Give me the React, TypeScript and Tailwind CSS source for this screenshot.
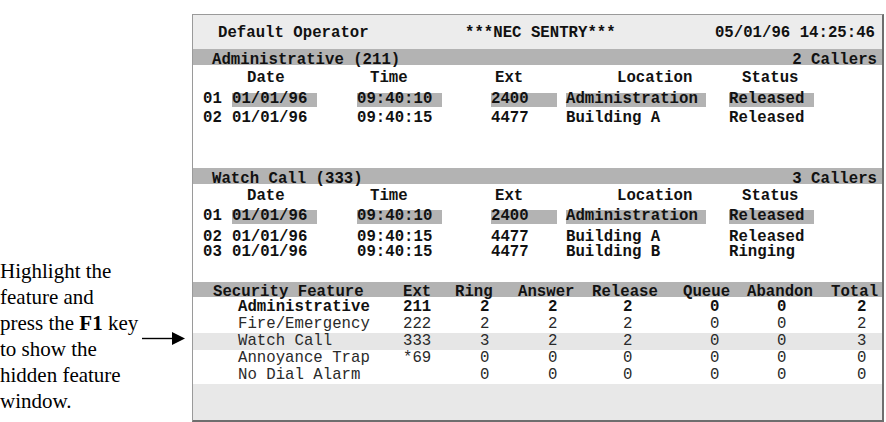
import React from "react";

type Call = {
  n: string;
  date: string;
  time: string;
  ext: string;
  loc: string;
  status: string;
  hl?: boolean;
  h: string;
};

type Feature = {
  name: string;
  ext: string;
  counts: string[];
  bold?: boolean;
  hl?: boolean;
};

const mono = "font-['Liberation_Mono',monospace]";

const adminCalls: Call[] = [
  { n: "01", date: "01/01/96", time: "09:40:10", ext: "2400", loc: "Administration", status: "Released", hl: true, h: "h-[19px]" },
  { n: "02", date: "01/01/96", time: "09:40:15", ext: "4477", loc: "Building A", status: "Released", h: "h-[20px]" },
];

const watchCalls: Call[] = [
  { n: "01", date: "01/01/96", time: "09:40:10", ext: "2400", loc: "Administration", status: "Released", hl: true, h: "h-[21px]" },
  { n: "02", date: "01/01/96", time: "09:40:15", ext: "4477", loc: "Building A", status: "Released", h: "h-[15px]" },
  { n: "03", date: "01/01/96", time: "09:40:15", ext: "4477", loc: "Building B", status: "Ringing", h: "h-[15px]" },
];

const features: Feature[] = [
  { name: "Administrative", ext: "211", counts: ["2", "2", "2", "0", "0", "2"], bold: true },
  { name: "Fire/Emergency", ext: "222", counts: ["2", "2", "2", "0", "0", "2"] },
  { name: "Watch Call", ext: "333", counts: ["3", "2", "2", "0", "0", "3"], hl: true },
  { name: "Annoyance Trap", ext: "*69", counts: ["0", "0", "0", "0", "0", "0"] },
  { name: "No Dial Alarm", ext: "", counts: ["0", "0", "0", "0", "0", "0"] },
];

// left padding of each count under its column heading
const countPad = ["pl-[25px]", "pl-[30px]", "pl-[31px]", "pl-[27px]", "pl-[30px]", "pl-[26px]"];

const CALL_COLS = "grid grid-cols-[29px_125px_134px_75px_163px_1fr] pl-[10px]";
const FEATURE_COLS = "grid grid-cols-[190px_52px_63px_74px_91px_64px_84px_1fr] pl-[20px]";

function Field({ w, hl, children }: { w: string; hl?: boolean; children: React.ReactNode }) {
  return (
    <span className={`block h-[14px] leading-[13px] whitespace-pre ${w} ${hl ? "bg-[#b3b3b3]" : ""}`}>
      {children}
    </span>
  );
}

function CallSection({
  title,
  callers,
  calls,
  headH,
}: {
  title: string;
  callers: string;
  calls: Call[];
  headH: string;
}) {
  return (
    <div>
      <div className="flex h-[16px] justify-between bg-[#b3b3b3] pl-[19px] pr-[5px] leading-[22px]">
        <span>{title}</span>
        <span>{callers}</span>
      </div>
      <div className={`${CALL_COLS} ${headH}`}>
        <span />
        <span className="pl-[15px]">Date</span>
        <span className="pl-[13px]">Time</span>
        <span className="pl-[4px]">Ext</span>
        <span className="pl-[51px]">Location</span>
        <span className="pl-[13px]">Status</span>
      </div>
      {calls.map((c) => (
        <div key={c.n} className={`${CALL_COLS} pt-[2px] ${c.h}`}>
          <Field w="w-auto">{c.n}</Field>
          <Field w="w-[85px]" hl={c.hl}>{c.date}</Field>
          <Field w="w-[85px]" hl={c.hl}>{c.time}</Field>
          <Field w="w-[66px]" hl={c.hl}>{c.ext}</Field>
          <Field w="w-[140px]" hl={c.hl}>{c.loc}</Field>
          <Field w="w-[85px]" hl={c.hl}>{c.status}</Field>
        </div>
      ))}
    </div>
  );
}

function FeatureTable() {
  return (
    <div>
      <div className={`${FEATURE_COLS} h-[15px] bg-[#b3b3b3] leading-[20px]`}>
        <span>Security Feature</span>
        <span>Ext</span>
        <span>Ring</span>
        <span>Answer</span>
        <span>Release</span>
        <span>Queue</span>
        <span>Abandon</span>
        <span>Total</span>
      </div>
      <div className="pt-[2px]">
        {features.map((f) => (
          <div
            key={f.name}
            className={`${FEATURE_COLS} h-[17px] leading-[17px] ${f.hl ? "bg-[#e6e6e6]" : ""} ${
              f.bold ? "font-bold text-[#111]" : "font-normal text-[#2a2a2a]"
            }`}
          >
            <span className="whitespace-pre pl-[25px]">{f.name}</span>
            <span>{f.ext}</span>
            {f.counts.map((v, i) => (
              <span key={i} className={countPad[i]}>
                {v}
              </span>
            ))}
          </div>
        ))}
      </div>
    </div>
  );
}

export default function App() {
  return (
    <div className="flex h-[422px] w-[886px] items-start overflow-hidden bg-white">
      {/* Caption and pointer */}
      <div className="flex w-[192px] shrink-0 pt-[258px]">
        <p className="w-[142px] whitespace-nowrap font-['Liberation_Serif',serif] text-[21px] leading-[26px] text-black">
          Highlight the
          <br />
          feature and
          <br />
          press the <b>F1</b> key
          <br />
          to show the
          <br />
          hidden feature
          <br />
          window.
        </p>
        <svg className="mt-[74px] shrink-0" width="44" height="13" viewBox="0 0 44 13">
          <line x1="0" y1="6.5" x2="31" y2="6.5" stroke="#000" strokeWidth="1.4" />
          <polygon points="30,0 43,6.5 30,13" fill="#000" />
        </svg>
      </div>

      {/* Terminal window */}
      <div
        className={`mt-[14px] flex h-[408px] w-[692px] shrink-0 flex-col border-t border-l border-r-2 border-b-2 border-t-[#9a9a9a] border-l-[#9a9a9a] border-r-[#6e6e6e] border-b-[#6e6e6e] ${mono} text-[15.7px] font-bold text-[#111]`}
      >
        <div className="flex h-[34px] shrink-0 bg-[#ececec] pl-[25px] pr-[7px] leading-[36px]">
          <span className="w-[247px]">Default Operator</span>
          <span>***NEC SENTRY***</span>
          <span className="ml-auto">05/01/96 14:25:46</span>
        </div>
        <CallSection title="Administrative (211)" callers="2 Callers" calls={adminCalls} headH="h-[26px] leading-[26px]" />
        <div className="mt-[38px]">
          <CallSection title="Watch Call (333)" callers="3 Callers" calls={watchCalls} headH="h-[24px] leading-[24px]" />
        </div>
        <div className="mt-[23px]">
          <FeatureTable />
        </div>
        <div className="flex-1 bg-[#e8e8e8]" />
      </div>
    </div>
  );
}
